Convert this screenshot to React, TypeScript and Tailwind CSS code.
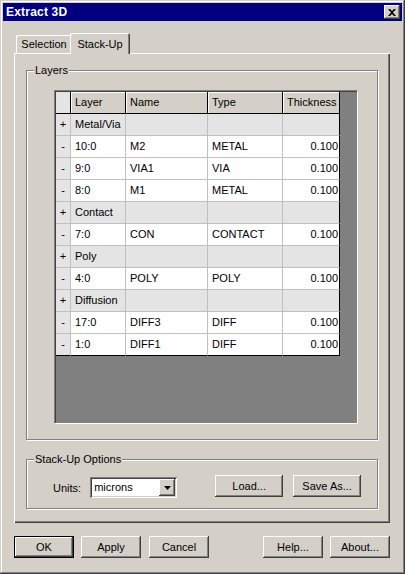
const FONT = 'font-["Liberation_Sans",Arial,sans-serif]';

const raised =
  'bg-[#d4d0c8] shadow-[inset_-1px_-1px_#404040,inset_1px_1px_#fff,inset_-2px_-2px_#808080,inset_2px_2px_#d4d0c8]';

type Row = { kind: 'group'; name: string } | { kind: 'item'; layer: string; name: string; type: string; thickness: string };

const rows: Row[] = [
  { kind: 'group', name: 'Metal/Via' },
  { kind: 'item', layer: '10:0', name: 'M2', type: 'METAL', thickness: '0.100' },
  { kind: 'item', layer: '9:0', name: 'VIA1', type: 'VIA', thickness: '0.100' },
  { kind: 'item', layer: '8:0', name: 'M1', type: 'METAL', thickness: '0.100' },
  { kind: 'group', name: 'Contact' },
  { kind: 'item', layer: '7:0', name: 'CON', type: 'CONTACT', thickness: '0.100' },
  { kind: 'group', name: 'Poly' },
  { kind: 'item', layer: '4:0', name: 'POLY', type: 'POLY', thickness: '0.100' },
  { kind: 'group', name: 'Diffusion' },
  { kind: 'item', layer: '17:0', name: 'DIFF3', type: 'DIFF', thickness: '0.100' },
  { kind: 'item', layer: '1:0', name: 'DIFF1', type: 'DIFF', thickness: '0.100' },
];

const Button = ({ label, width, isDefault }: { label: string; width: string; isDefault?: boolean }) =>
  isDefault ? (
    <div className={`${width} h-[22px] border border-black`}>
      <div className={`${raised} w-full h-full flex items-center justify-center text-[11px] text-black`}>
        {label}
      </div>
    </div>
  ) : (
    <div className={`${raised} ${width} h-[22px] flex items-center justify-center text-[11px] text-black`}>
      {label}
    </div>
  );

const GroupBox = ({
  label,
  className,
  children,
}: {
  label: string;
  className: string;
  children: React.ReactNode;
}) => (
  <div
    className={`relative border border-[#808080] shadow-[inset_1px_1px_#fff,1px_1px_#fff] ${className}`}>
    <span className="absolute -top-[7px] left-[7px] bg-[#d4d0c8] px-[1px] text-[11px] leading-[13px] text-black">
      {label}
    </span>
    {children}
  </div>
);

const LayerGrid = () => {
  const cols = ['w-[15px]', 'w-[55px]', 'w-[82px]', 'w-[75px]', 'w-[57px]'];
  return (
    <div className="w-[304px] h-[334px] border-l border-t border-[#808080] border-r border-b border-r-white border-b-white">
      <div className="w-full h-full border-l border-t border-[#404040] bg-[#808080]">
        <div className="flex h-[22px]">
          <div className={`${cols[0]} bg-[#e4e4e4] border-r border-b border-black`} />
          {['Layer', 'Name', 'Type', 'Thickness'].map((h, i) => (
            <div
              key={h}
              className={`${cols[i + 1]} bg-[#d4d0c8] shadow-[inset_1px_1px_#fff] border-r border-b border-black flex items-center pl-[4px] text-[11px] text-black`}>
              {h}
            </div>
          ))}
        </div>
        {rows.map((r, idx) => {
          const last = idx === rows.length - 1;
          const bottom = last ? 'border-b border-b-black' : 'border-b border-b-[#c0c0c0]';
          const bg = r.kind === 'group' ? 'bg-[#e4e4e4]' : 'bg-white';
          const cells =
            r.kind === 'group' ? [r.name, '', '', ''] : [r.layer, r.name, r.type, r.thickness];
          return (
            <div key={idx} className="flex h-[22px]">
              <div
                className={`${cols[0]} bg-[#e4e4e4] border-r border-r-[#c0c0c0] ${bottom} flex items-center justify-center text-[11px] text-black`}>
                {r.kind === 'group' ? '+' : '-'}
              </div>
              {cells.map((c, i) => (
                <div
                  key={i}
                  className={`${cols[i + 1]} ${bg} ${bottom} border-r ${
                    i === 3 ? 'border-r-black justify-end pr-[1px]' : 'border-r-[#c0c0c0] pl-[4px]'
                  } flex items-center whitespace-nowrap overflow-hidden text-[11px] text-black`}>
                  {c}
                </div>
              ))}
            </div>
          );
        })}
      </div>
    </div>
  );
};

export default function App() {
  return (
    <div
      className={`${FONT} w-[405px] h-[574px] bg-[#d4d0c8] p-[3px] shadow-[inset_-1px_-1px_#404040,inset_1px_1px_#d4d0c8,inset_-2px_-2px_#808080,inset_2px_2px_#fff] flex flex-col`}>
      {/* title bar */}
      <div className="h-[18px] bg-[#000080] flex items-center justify-between pl-[3px] pr-[2px]">
        <span className="text-[12px] font-bold tracking-[0.2px] text-white">Extract 3D</span>
        <div className={`${raised} w-[16px] h-[14px] flex items-center justify-center`}>
          <svg width="8" height="7" viewBox="0 0 8 7">
            <path d="M0 0h2l2 2 2-2h2L5 3.5 8 7H6L4 5 2 7H0l3-3.5z" fill="#000" />
          </svg>
        </div>
      </div>

      {/* tabs */}
      <div className="mt-[12px] ml-[11px] flex items-end h-[20px] pl-[2px] text-[11px] text-black">
        <div className="w-[56px] h-[18px] rounded-t-[2px] bg-[#d4d0c8] shadow-[inset_1px_1px_#fff,inset_-1px_0_#404040,inset_-2px_0_#808080] flex items-center justify-center">
          Selection
        </div>
        <div className="relative z-10 -ml-[2px] -mb-[1px] w-[60px] h-[21px] rounded-t-[2px] bg-[#d4d0c8] shadow-[inset_1px_1px_#fff,inset_-1px_0_#404040,inset_-2px_0_#808080] flex items-start pt-[3px] justify-center">
          Stack-Up
        </div>
      </div>

      {/* tab panel */}
      <div className="ml-[11px] w-[376px] h-[470px] shadow-[inset_1px_1px_#fff,inset_-1px_-1px_#404040,inset_-2px_-2px_#808080] pl-[12px] pt-[17px]">
        <GroupBox label="Layers" className="w-[352px] h-[370px]">
          <div className="ml-[27px] mt-[19px]">
            <LayerGrid />
          </div>
        </GroupBox>

        <GroupBox label="Stack-Up Options" className="mt-[19px] w-[352px] h-[50px]">
          <div className="flex items-start pt-[15px] text-[11px] text-black">
            <span className="ml-[26px] mt-[5px]">Units:</span>
            <div className="ml-[9px] mt-[2px] w-[87px] h-[21px] bg-white shadow-[inset_1px_1px_#808080,inset_-1px_-1px_#fff,inset_2px_2px_#404040,inset_-2px_-2px_#d4d0c8] flex items-center justify-between pl-[4px] pr-[2px]">
              <span>microns</span>
              <div className={`${raised} w-[16px] h-[17px] flex items-center justify-center`}>
                <svg width="7" height="4" viewBox="0 0 7 4">
                  <path d="M0 0h7L3.5 4z" fill="#000" />
                </svg>
              </div>
            </div>
            <div className="ml-[38px] flex gap-[10px]">
              <Button label="Load..." width="w-[68px]" />
              <Button label="Save As..." width="w-[68px]" />
            </div>
          </div>
        </GroupBox>
      </div>

      {/* dialog buttons */}
      <div className="mt-[13px] ml-[11px] flex">
        <Button label="OK" width="w-[60px]" isDefault />
        <div className="ml-[7px]">
          <Button label="Apply" width="w-[60px]" />
        </div>
        <div className="ml-[8px]">
          <Button label="Cancel" width="w-[60px]" />
        </div>
        <div className="ml-[54px]">
          <Button label="Help..." width="w-[60px]" />
        </div>
        <div className="ml-[7px]">
          <Button label="About..." width="w-[60px]" />
        </div>
      </div>
    </div>
  );
}
